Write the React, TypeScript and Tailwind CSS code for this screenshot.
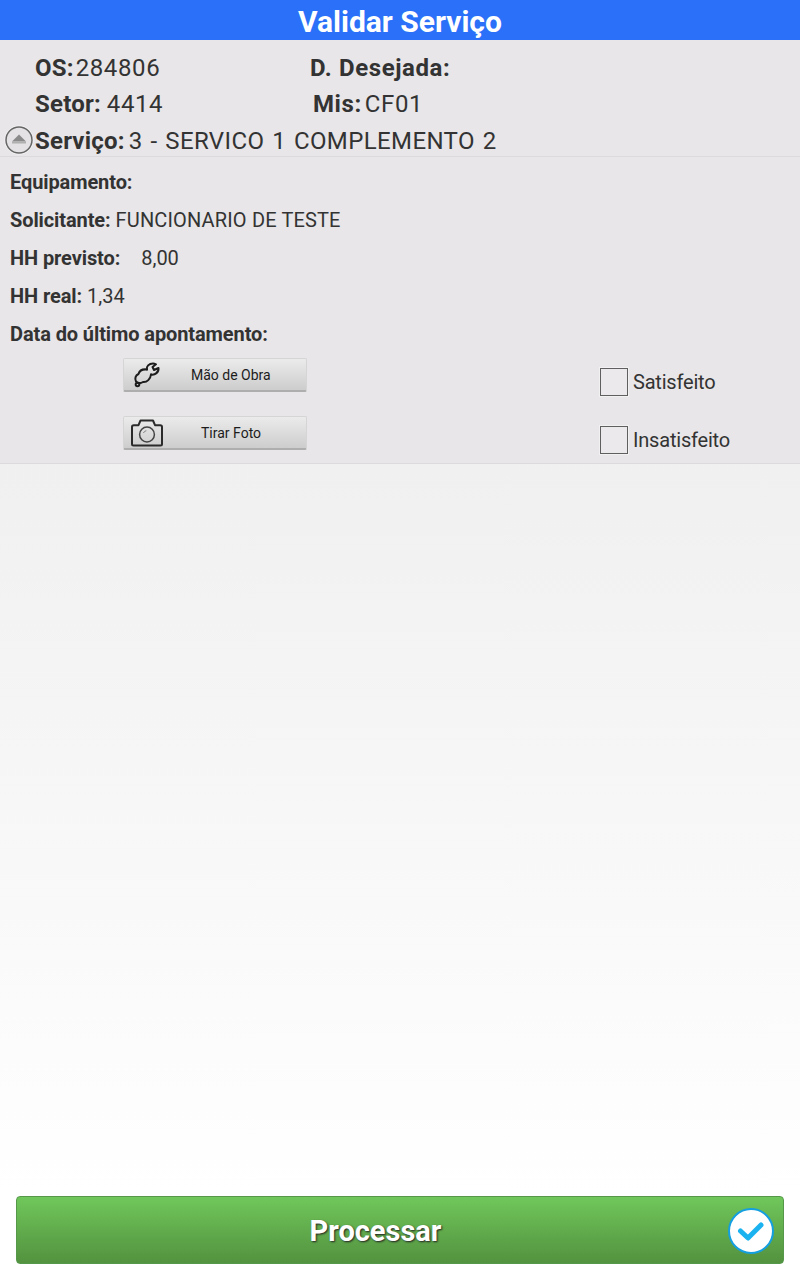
const roboto = "font-['Roboto',sans-serif]";

function CollapseIcon() {
  return (
    <svg className="w-[30px] h-[30px] shrink-0" viewBox="0 0 30 30">
      <circle cx="15" cy="15" r="14.5" fill="#f6f5f6" />
      <circle cx="15" cy="15" r="13" fill="#e4e2e4" stroke="#666" strokeWidth="1.5" />
      <path d="M15 9.5 L22 16.5 L8 16.5 Z" fill="#8a8a8a" />
      <rect x="8" y="16.5" width="14" height="2" fill="#b0b0b0" />
    </svg>
  );
}

function PlugIcon() {
  return (
    <svg className="w-[28px] h-[26px] ml-[3px]" viewBox="0 0 28 26" fill="none" stroke="#1c1c1c" strokeWidth="2" strokeLinecap="round" strokeLinejoin="round">
      <path d="M14 7.5 C10 7 6.5 8.5 5.5 12 C2.5 13.5 1.5 16.5 3 19.5 C5 21.5 7.5 21.5 10 20 C14 20.5 17.5 17 18 12.5" />
      <path d="M14 7.5 C13 4.5 16 1.5 20 1.5 C21 1.5 22 1.8 23 2.3 L19.5 5 L21 8 L25.5 6 C26 10 22 13.5 18 12.5" />
      <circle cx="4.5" cy="22.5" r="1.8" />
    </svg>
  );
}

function CameraIcon() {
  return (
    <svg className="w-[34px] h-[28px]" viewBox="0 0 34 28" fill="none" stroke="#2a2a2a" strokeWidth="2" strokeLinejoin="round">
      <path d="M2 8 C2 6.8 2.6 6.2 3.8 6.2 L8.5 6.2 L10.5 1.5 L23 1.5 L25 6.2 L30.2 6.2 C31.4 6.2 32 6.8 32 8 L32 25 C32 26 31.5 26.5 30.5 26.5 L3.5 26.5 C2.5 26.5 2 26 2 25 Z" />
      <circle cx="17" cy="15.5" r="7.4" stroke="#444" strokeWidth="1.5" />
      <path d="M13.5 14 C14 12.8 15 12 16.3 11.8" strokeWidth="1" stroke="#777" />
    </svg>
  );
}

function ActionButton({ icon, label, labelClass }: { icon: React.ReactNode; label: string; labelClass: string }) {
  return (
    <button className="relative flex items-center w-[184px] h-[34px] rounded-[2px] border border-[#d6d5d6] border-b-2 border-b-[#aeaeae] bg-gradient-to-b from-[#ebebeb] to-[#cdcdcd] text-[14px] text-[#1c1c1c]">
      <span className="absolute left-[6px] top-0 bottom-0 flex items-center">{icon}</span>
      <span className={labelClass}>{label}</span>
    </button>
  );
}

function Check({ label }: { label: string }) {
  return (
    <div className="flex items-center h-[28px]">
      <span className="w-[28px] h-[28px] border border-[#5f5f5f] bg-[#ebe9eb] shadow-[0_0_0_1px_#f2f1f2]" />
      <span className="ml-[5px] text-[20px] tracking-[-0.2px] text-[#333333]">{label}</span>
    </div>
  );
}

function Row({ label, value, gap }: { label: string; value?: string; gap: string }) {
  return (
    <div className="flex items-center h-[38px] text-[20px] text-[#333333]">
      <span className="font-bold tracking-[-0.1px]">{label}</span>
      {value && <span className={gap}>{value}</span>}
    </div>
  );
}

export default function App() {
  return (
    <div className={`w-[800px] h-[1280px] flex flex-col bg-white ${roboto}`}>
      <header className="h-[40px] shrink-0 bg-[#2b70f8] flex items-center justify-center text-white text-[30px] font-bold leading-none pt-[3px]">
        Validar Serviço
      </header>

      <section className="shrink-0 bg-[#e8e6e8] text-[#333333]">
        <div className="h-[117px] border-b border-[#dcdadc] pt-[10px] text-[24px] tracking-[0.6px] leading-[36px]">
          <div className="flex pl-[35px] h-[36px]">
            <div className="w-[275px] flex">
              <span className="font-bold tracking-[0.2px]">OS:</span>
              <span className="ml-[2px]">284806</span>
            </div>
            <span className="font-bold">D. Desejada:</span>
          </div>
          <div className="flex pl-[35px] h-[36px]">
            <div className="w-[278px] flex">
              <span className="font-bold tracking-[0.2px]">Setor:</span>
              <span className="ml-[6px]">4414</span>
            </div>
            <span className="font-bold">Mis:</span>
            <span className="ml-[3px]">CF01</span>
          </div>
          <div className="flex items-center pl-[4px] h-[36px]">
            <CollapseIcon />
            <span className="ml-[1px] font-bold pt-[1px] tracking-[0.2px]">Serviço:</span>
            <span className="ml-[4px] pt-[1px] tracking-[0.39px] [word-spacing:1.5px]">3 - SERVICO 1 COMPLEMENTO 2</span>
          </div>
        </div>

        <div className="h-[307px] px-[10px] pt-[6px] relative border-b border-[#dcdadc]">
          <Row label="Equipamento:" gap="" />
          <Row label="Solicitante:" value="FUNCIONARIO DE TESTE" gap="ml-[5px] tracking-[0.15px]" />
          <Row label="HH previsto:" value="8,00" gap="ml-[21px]" />
          <Row label="HH real:" value="1,34" gap="ml-[5px]" />
          <Row label="Data do último apontamento:" gap="" />
          <div className="flex mt-[5px]">
            <div className="ml-[113px] flex flex-col gap-[24px]">
              <ActionButton icon={<PlugIcon />} label="Mão de Obra" labelClass="ml-[67px] pt-[2px]" />
              <ActionButton icon={<CameraIcon />} label="Tirar Foto" labelClass="ml-[77px] pt-[2px]" />
            </div>
            <div className="ml-[293px] pt-[10px] flex flex-col gap-[30px]">
              <Check label="Satisfeito" />
              <Check label="Insatisfeito" />
            </div>
          </div>
        </div>
      </section>

      <main className="flex-1 flex flex-col justify-end bg-gradient-to-b from-[#f0f0f0] to-white to-[90%] px-[16px] pb-[16px]">
        <button className="relative h-[68px] rounded-[4px] border border-[#55984a] bg-gradient-to-b from-[#70c75b] to-[#53923f] flex items-center justify-center">
          <span className="text-[29px] font-bold text-white [text-shadow:1px_1px_2px_#222] mr-[49px] pt-[3px]">Processar</span>
          <svg className="absolute right-[9px] top-[11px] w-[46px] h-[46px]" viewBox="0 0 46 46">
            <circle cx="23" cy="23" r="22" fill="#ffffff" stroke="#149fe0" strokeWidth="2" />
            <path d="M12.5 23 L20 30 L33 17" fill="none" stroke="#1bb2f0" strokeWidth="5" strokeLinecap="round" strokeLinejoin="round" />
          </svg>
        </button>
      </main>
    </div>
  );
}
